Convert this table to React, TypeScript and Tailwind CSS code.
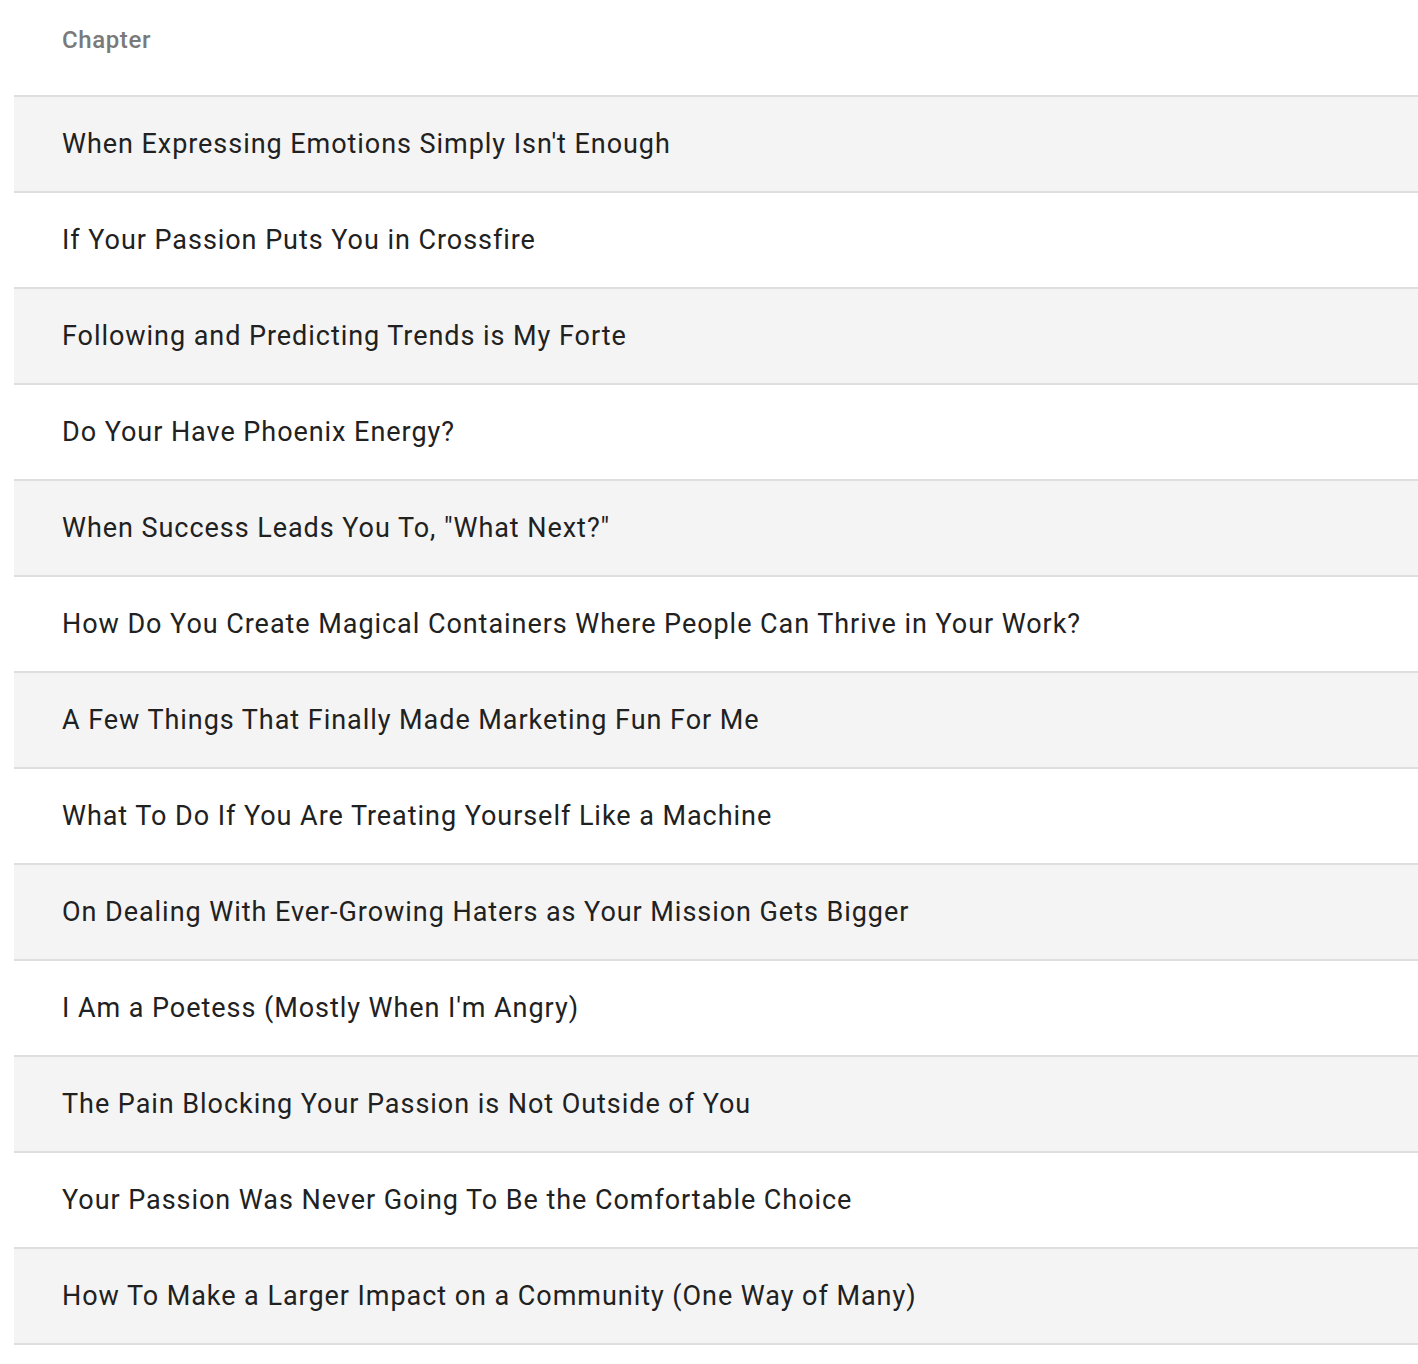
import React from "react";

const chapters = [
  "When Expressing Emotions Simply Isn't Enough",
  "If Your Passion Puts You in Crossfire",
  "Following and Predicting Trends is My Forte",
  "Do Your Have Phoenix Energy?",
  'When Success Leads You To, "What Next?"',
  "How Do You Create Magical Containers Where People Can Thrive in Your Work?",
  "A Few Things That Finally Made Marketing Fun For Me",
  "What To Do If You Are Treating Yourself Like a Machine",
  "On Dealing With Ever-Growing Haters as Your Mission Gets Bigger",
  "I Am a Poetess (Mostly When I'm Angry)",
  "The Pain Blocking Your Passion is Not Outside of You",
  "Your Passion Was Never Going To Be the Comfortable Choice",
  "How To Make a Larger Impact on a Community (One Way of Many)",
];

export default function App() {
  return (
    <div className="w-[1418px] min-h-[1364px] bg-white pl-[14px] font-['Roboto',sans-serif]">
      <div className="h-[97px] border-b-2 border-[#dedede] pl-[48px] pt-[24px]">
        <span className="text-[24px] leading-[32px] font-medium text-[#7a7a7a] tracking-[0.6px]">Chapter</span>
      </div>
      {chapters.map((c, i) => (
        <div
          key={i}
          className={
            i % 2 === 0
              ? "h-[96px] border-b-2 border-[#dedede] bg-[#f4f4f4] pl-[48px] flex items-center"
              : "h-[96px] border-b-2 border-[#dedede] bg-white pl-[48px] flex items-center"
          }
        >
          <span className="text-[27px] leading-[32px] text-[#212121] tracking-[0.95px]">{c}</span>
        </div>
      ))}
    </div>
  );
}
